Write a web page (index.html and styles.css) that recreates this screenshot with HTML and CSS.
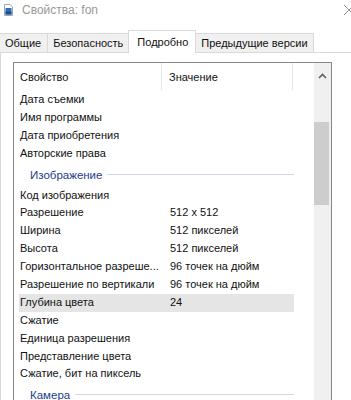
FILE: index.html
```html
<!DOCTYPE html>
<html lang="ru">
<head>
    <meta charset="UTF-8">
    <meta name="viewport" content="width=device-width, initial-scale=1.0">
    <title>Свойства: fon</title>
    <link rel="stylesheet" href="styles.css">
</head>
<body>
    <div class="titlebar">
        <svg class="file-icon" width="9" height="12" viewBox="0 0 9 12">
            <path d="M0.5 0.5 H6 L8.5 3 V11.5 H0.5 Z" fill="#fff" stroke="#9aa7b8"/>
            <rect x="1.5" y="4" width="6" height="6.5" fill="#2f6db5"/>
            <rect x="1.5" y="7.5" width="6" height="3" fill="#1d4f8f"/>
        </svg>
        <span class="title">Свойства: fon</span>
        <svg class="close" width="12" height="12" viewBox="0 0 12 12">
            <path d="M1 1 L11 11 M11 1 L1 11" stroke="#999" stroke-width="1"/>
        </svg>
    </div>

    <div class="tabs">
        <div class="tab first">Общие</div>
        <div class="tab">Безопасность</div>
        <div class="tab active">Подробно</div>
        <div class="tab">Предыдущие версии</div>
    </div>

    <div class="page">
        <div class="listview">
            <div class="list">
                <div class="header">
                    <div class="hcol name-col">Свойство</div>
                    <div class="hcol value-col">Значение</div>
                </div>

                <div class="row"><span class="name">Дата съемки</span><span class="value"></span></div>
                <div class="row"><span class="name">Имя программы</span><span class="value"></span></div>
                <div class="row"><span class="name">Дата приобретения</span><span class="value"></span></div>
                <div class="row"><span class="name">Авторские права</span><span class="value"></span></div>

                <div class="group"><span>Изображение</span><i></i></div>

                <div class="row"><span class="name">Код изображения</span><span class="value"></span></div>
                <div class="row"><span class="name">Разрешение</span><span class="value">512 x 512</span></div>
                <div class="row"><span class="name">Ширина</span><span class="value">512 пикселей</span></div>
                <div class="row"><span class="name">Высота</span><span class="value">512 пикселей</span></div>
                <div class="row"><span class="name">Горизонтальное разреше...</span><span class="value">96 точек на дюйм</span></div>
                <div class="row"><span class="name">Разрешение по вертикали</span><span class="value">96 точек на дюйм</span></div>
                <div class="row selected"><span class="name">Глубина цвета</span><span class="value">24</span></div>
                <div class="row"><span class="name">Сжатие</span><span class="value"></span></div>
                <div class="row"><span class="name">Единица разрешения</span><span class="value"></span></div>
                <div class="row"><span class="name">Представление цвета</span><span class="value"></span></div>
                <div class="row"><span class="name">Сжатие, бит на пиксель</span><span class="value"></span></div>

                <div class="group last"><span>Камера</span><i></i></div>
            </div>

            <div class="scrollbar">
                <div class="arrow">
                    <svg width="9" height="6" viewBox="0 0 9 6">
                        <path d="M1 5 L4.5 1.5 L8 5" fill="none" stroke="#606060" stroke-width="1.6"/>
                    </svg>
                </div>
                <div class="track">
                    <div class="thumb"></div>
                </div>
            </div>
        </div>
    </div>
</body>
</html>
```

FILE: styles.css
```css
body {
    margin: 0;
    background-color: #fff;
    font-family: "Liberation Sans", Arial, sans-serif;
    font-size: 11px;
    color: #111;
    overflow: hidden;
    height: 400px;
}

.titlebar {
    height: 30px;
    display: flex;
    align-items: flex-start;
    position: relative;
}

.file-icon {
    margin: 4px 0 0 4px;
}

.title {
    margin: 2px 0 0 9px;
    line-height: 16px;
    font-size: 12px;
    color: #999;
}

.close {
    position: absolute;
    right: -4px;
    top: 4px;
}

.tabs {
    height: 23px;
    display: flex;
    align-items: flex-end;
    border-bottom: 1px solid #d9d9d9;
    box-sizing: border-box;
}

.tab {
    height: 19px;
    line-height: 19px;
    padding: 0 5px;
    background-color: #f0f0f0;
    border: 1px solid #d9d9d9;
    border-bottom: none;
    margin-left: -1px;
    box-sizing: border-box;
    white-space: nowrap;
}

.tab.first {
    margin-left: -2px;
    padding-left: 6px;
    padding-right: 6px;
}

.tab.active {
    height: 23px;
    line-height: 22px;
    margin-bottom: -1px;
    padding: 0 7px 0 8px;
    background-color: #fff;
}

.page {
    border-left: 1px solid #d9d9d9;
    height: 347px;
    padding: 9px 0 0 12px;
}

.listview {
    width: 319px;
    height: 360px;
    border: 1px solid #828790;
    box-sizing: border-box;
    display: flex;
}

.list {
    flex: 1;
    overflow: hidden;
}

.header {
    height: 28px;
    display: flex;
}

.hcol {
    height: 27px;
    line-height: 29px;
    border-right: 1px solid #e5e5e5;
    box-sizing: border-box;
    white-space: nowrap;
}

.name-col {
    width: 148px;
    padding-left: 6px;
}

.value-col {
    width: 131px;
    padding-left: 7px;
}

.row {
    height: 17.9px;
    line-height: 17.9px;
    margin-left: 5px;
    width: 275px;
    display: flex;
    white-space: nowrap;
}

.row.selected {
    background-color: #e5e5e5;
}

.row .name {
    width: 150px;
    padding-left: 1px;
    overflow: hidden;
}

.row .value {
    flex: 1;
}

.group {
    height: 24px;
    margin-left: 5px;
    width: 275px;
    display: flex;
    align-items: center;
    padding-top: 1px;
    box-sizing: border-box;
}

.group.last {
    padding-top: 0;
}

.group span {
    padding-left: 11px;
    color: #1e3c8c;
    font-size: 11.5px;
}

.group i {
    flex: 1;
    height: 1px;
    margin: 0 0 1px 5px;
    background-color: #cfd8e8;
}

.scrollbar {
    width: 17px;
    background-color: #f0f0f0;
    display: flex;
    flex-direction: column;
}

.arrow {
    height: 24px;
    display: flex;
    align-items: center;
    justify-content: center;
    padding-top: 1px;
    box-sizing: border-box;
}

.track {
    flex: 1;
    padding-top: 35px;
}

.thumb {
    width: 15px;
    height: 83px;
    background-color: #cdcdcd;
}
```
